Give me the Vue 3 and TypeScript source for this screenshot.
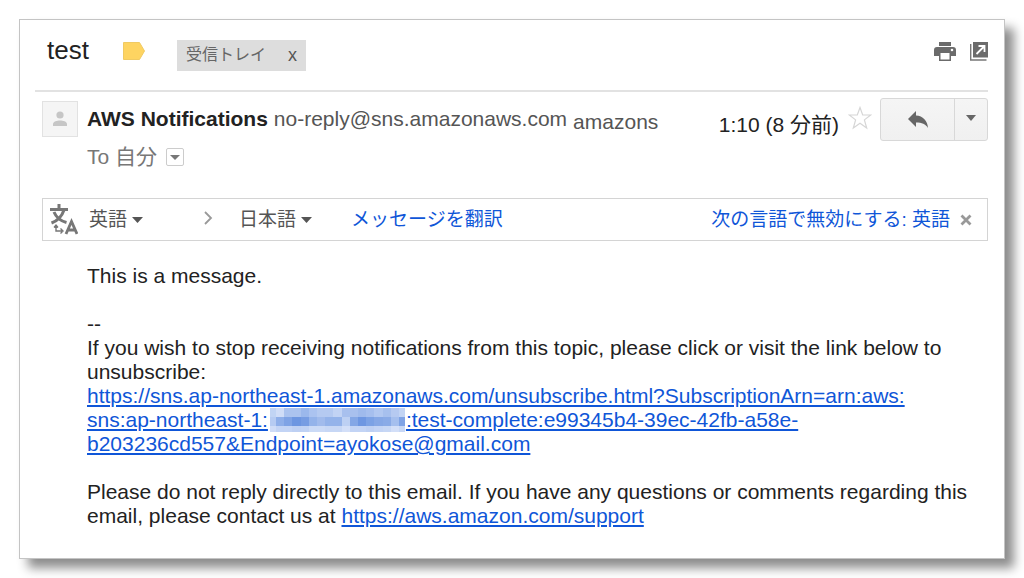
<script setup lang="ts">
import { ref } from 'vue'

const starred = ref(false)
const languages = ['英語', '日本語', '中国語']
const source = ref('英語')
const target = ref('日本語')

const tops: number[] = [0, 9, 18]
const shades: string[][] = [
  ['#c1d4f4', '#d0ddf7', '#abc3ef', '#abc3ef', '#9bb8ec', '#abc3f0', '#b5caf1', '#b5caf1', '#c2d3f4', '#a8c0ee', '#a8c0ee', '#9fbaec', '#a6bfee', '#b2c8f1', '#a7c0ee', '#b6caf1', '#c2d4f4'],
  ['#b6cbf2', '#8fafe9', '#7fa3e5', '#6d96e1', '#779de3', '#94b3ea', '#a1bbec', '#94b3ea', '#94b3ea', '#bdd0f3', '#84a7e6', '#6e97e2', '#7ca2e5', '#86a8e6', '#8aabe7', '#a5bfee', '#7fa3e5'],
  ['#cfdcf7', '#c3d4f5', '#c3d4f5', '#bed0f3', '#c0d2f4', '#cbdaf6', '#cbdaf6', '#c7d7f5', '#c7d7f5', '#d3dff8', '#c3d4f5', '#c3d4f5', '#bed0f3', '#c3d4f5', '#c7d7f5', '#d3dff8', '#c7d7f5'],
]
const cells = shades.flatMap((row, r) =>
  row.map((fill, c) => ({
    fill,
    x: c === 0 ? 0 : 6 + Math.round((c - 1) * 8.2),
    y: tops[r],
    key: `${r}-${c}`,
  })),
)
</script>

<template>
  <main class="card">
    <header class="subject">
      <h1>test</h1>
      <svg class="tag" width="22" height="18" viewBox="0 0 22 18" aria-hidden="true">
        <path d="M.5 .5H16.5L21.5 9L16.5 17.5H.5Z" fill="#fed461" stroke="#f0ca63" />
      </svg>
      <span class="label">受信トレイ<button type="button" aria-label="ラベルを削除">x</button></span>
      <div class="tools">
        <button type="button" aria-label="印刷">
          <svg width="22" height="20" viewBox="0 0 22 20">
            <path d="M5 0H17V4H5Z" fill="#6b6b6b" />
            <path fill-rule="evenodd" d="M3 5H19Q22 5 22 8V14H17V19H5V14H0V8Q0 5 3 5ZM6.5 11V17.5H15.5V11ZM18 6.7A1.3 1.3 0 1 0 18 9.3A1.3 1.3 0 1 0 18 6.7Z" fill="#6b6b6b" />
          </svg>
        </button>
        <button type="button" aria-label="新しいウィンドウ">
          <svg width="18" height="19" viewBox="0 0 18 19">
            <path d="M3 0H18V15.5H3Z" fill="#6b6b6b" />
            <path d="M.7 2V18H16.5" fill="none" stroke="#777" stroke-width="1.4" />
            <path d="M6.5 12L14 4.500M8.500 4H14.500V10" fill="none" stroke="#fff" stroke-width="1.8" />
          </svg>
        </button>
      </div>
    </header>

    <section class="sender">
      <div class="avatar">
        <svg width="16" height="16" viewBox="0 0 16 16" aria-hidden="true">
          <circle cx="8" cy="4" r="3.600" fill="#c6c6c6" />
          <path d="M1 15V13C1 10.500 5 9.500 8 9.500S15 10.500 15 13V15Z" fill="#c6c6c6" />
        </svg>
      </div>
      <div class="who">
        <div class="from">
          <strong>AWS Notifications</strong>
          <span class="address">no-reply@sns.amazonaws.com</span>
          <span class="via">amazons</span>
        </div>
        <div class="to">
          To 自分
          <button type="button" aria-label="詳細を表示">
            <svg width="10" height="5" viewBox="0 0 10 5"><path d="M0 0H10L5 5Z" fill="#777" /></svg>
          </button>
        </div>
      </div>
      <time>1:10 (8 分前)</time>
      <button class="star" type="button" aria-label="スター" :aria-pressed="starred" @click="starred = !starred">
        <svg width="24" height="24" viewBox="0 0 24 24">
          <path d="M12 1.500L14.700 9H22.700L16.400 13.900L18.700 22L12 17.300L5.300 22L7.600 13.900L1.300 9H9.300Z" :fill="starred ? '#fed461' : '#fff'" stroke="#d6d6d6" stroke-width="1.200" />
        </svg>
      </button>
      <div class="actions">
        <button class="reply" type="button" aria-label="返信">
          <svg width="20" height="17" viewBox="0 0 20 17">
            <path d="M0 8L8 0V4.500C15 5 19.500 9.500 20 17C17.500 13 14 11.500 8 11.500V16Z" fill="#666" />
          </svg>
        </button>
        <button class="more" type="button" aria-label="その他">
          <svg width="10" height="6" viewBox="0 0 10 6"><path d="M0 0H10L5 6Z" fill="#666" /></svg>
        </button>
      </div>
    </section>

    <section class="translate">
      <svg class="lang-icon" width="28" height="31" viewBox="0 0 28 31" fill="none" stroke="#777" aria-hidden="true">
        <path d="M9 0V5M0 5.500H18M14 6C12 12 7 17 1.500 19M4 8C6 13 11 17 16.500 18.500" stroke-width="3" />
        <path d="M6 21V27H12M4 23.500L6 21L8 23.500M10.500 24.500L13 27L10.500 29.500" stroke-width="1.400" />
        <path d="M16 30L21.500 17.500L27 30M18 26H25" stroke-width="2.800" />
      </svg>
      <label class="pick source">
        <select v-model="source" aria-label="翻訳元の言語">
          <option v-for="l in languages" :key="l">{{ l }}</option>
        </select>
        <svg width="11" height="6" viewBox="0 0 11 6"><path d="M0 0H11L5.500 6Z" fill="#555" /></svg>
      </label>
      <svg class="chevron" width="9" height="14" viewBox="0 0 9 14" aria-hidden="true">
        <path d="M1 1L7 7L1 13" fill="none" stroke="#999" stroke-width="1.800" />
      </svg>
      <label class="pick target">
        <select v-model="target" aria-label="翻訳先の言語">
          <option v-for="l in languages" :key="l">{{ l }}</option>
        </select>
        <svg width="11" height="6" viewBox="0 0 11 6"><path d="M0 0H11L5.500 6Z" fill="#555" /></svg>
      </label>
      <a href="#">メッセージを翻訳</a>
      <a class="disable" href="#">次の言語で無効にする: 英語</a>
      <button class="close" type="button" aria-label="閉じる">
        <svg width="12" height="12" viewBox="0 0 12 12"><path d="M1.500 1.500L10.500 10.500M10.500 1.500L1.500 10.500" stroke="#999" stroke-width="2.800" /></svg>
      </button>
    </section>

    <article class="message">
      <p>This is a message.</p>
      <p>
        --<br />If you wish to stop receiving notifications from this topic, please click or visit the link below to unsubscribe:<br />
        <a href="#">https://sns.ap-northeast-1.amazonaws.com/unsubscribe.html?SubscriptionArn=arn:aws:<br />sns:ap-northeast-1:<span class="masked"><svg width="135" height="24" viewBox="0 0 135 24" shape-rendering="crispEdges" aria-hidden="true"><rect v-for="cell in cells" :key="cell.key" :x="cell.x" :y="cell.y" width="9" height="9" :fill="cell.fill" /></svg></span>:test-complete:e99345b4-39ec-42fb-a58e-<br />b203236cd557&amp;Endpoint=ayokose@gmail.com</a>
      </p>
      <p>
        Please do not reply directly to this email. If you have any questions or comments regarding this email, please contact us at <a href="#">https://aws.amazon.com/support</a>
      </p>
    </article>
  </main>
</template>

<style>
body {
  margin: 0;
  background: #fff;
}
</style>

<style scoped>
.card {
  box-sizing: border-box;
  margin: 19px;
  padding: 0 16px 30px 15px;
  border: 1px solid #c4c4c4;
  background: #fff;
  box-shadow: 9px 9px 10px rgba(0, 0, 0, 0.45);
  color: #222;
  font-family: "Liberation Sans", Arial, "Noto Sans CJK JP", sans-serif;
  font-size: 21px;
  line-height: 24px;
}
button {
  display: flex;
  align-items: center;
  justify-content: center;
  padding: 0;
  border: 0;
  background: none;
  color: inherit;
  font: inherit;
  cursor: pointer;
}
svg {
  display: block;
  flex: none;
}
a {
  color: #0f56d8;
}
.subject {
  display: flex;
  align-items: center;
  height: 70px;
  padding-left: 12px;
  border-bottom: 2px solid #e2e2e2;
}
h1 {
  margin: 0;
  padding-bottom: 10px;
  font-size: 26px;
  line-height: 30px;
  font-weight: 400;
}
.tag {
  margin: 0 32px 8px 34px;
}
.label {
  display: flex;
  align-items: center;
  gap: 22px;
  height: 31px;
  padding: 0 9px;
  background: #ddd;
  color: #666;
  font-size: 16px;
}
.label button {
  color: #555;
  font-size: 18px;
}
.tools {
  display: flex;
  align-items: center;
  gap: 14px;
  margin-left: auto;
  padding-bottom: 7px;
}
.sender {
  display: flex;
  align-items: flex-start;
  padding: 6px 0 0 7px;
}
.avatar {
  display: flex;
  align-items: center;
  justify-content: center;
  box-sizing: border-box;
  width: 36px;
  height: 36px;
  margin-top: 3px;
  border: 1px solid #e2e2e2;
  background: #f5f5f5;
}
.who {
  flex: 1;
  margin-left: 9px;
}
.from {
  display: flex;
  gap: 6px;
  padding-top: 9px;
  white-space: nowrap;
}
.address {
  color: #555;
}
.via {
  padding-top: 3px;
  color: #555;
}
.to {
  display: flex;
  align-items: center;
  gap: 9px;
  padding-top: 11px;
  color: #777;
}
.to button {
  width: 18px;
  height: 18px;
  border: 1px solid #ccc;
  border-radius: 2px;
}
time {
  padding-top: 15px;
  white-space: nowrap;
}
.star {
  margin: 8px 8px 0 9px;
}
.actions {
  display: flex;
  box-sizing: border-box;
  height: 43px;
  border: 1px solid #d8d8d8;
  border-radius: 3px;
  background: linear-gradient(#f5f5f5, #f0f0f0);
}
.reply {
  width: 73px;
}
.more {
  width: 33px;
  padding-bottom: 4px;
  border-left: 1px solid #d8d8d8;
}
.translate {
  display: flex;
  align-items: center;
  height: 41px;
  margin: 29px 0 0 7px;
  padding: 0 15px 0 7px;
  border: 1px solid #d4d4d4;
  font-size: 19px;
}
.translate a {
  text-decoration: none;
}
.pick {
  display: flex;
  align-items: center;
  gap: 5px;
}
.pick select {
  appearance: none;
  field-sizing: content;
  padding: 0;
  border: 0;
  background: none;
  color: #555;
  font: inherit;
}
.source {
  margin-left: 11px;
}
.chevron {
  margin: 0 26px 4px 61px;
}
.target {
  margin-right: 39px;
}
.translate .disable {
  margin: 0 10px 0 auto;
}
.message {
  padding: 23px 16px 0 52px;
}
.message p {
  margin: 0 0 24px;
}
.message p:last-child {
  margin: 0;
}
.masked {
  display: inline-block;
  padding: 0 1px 0 2px;
  vertical-align: top;
}
</style>
